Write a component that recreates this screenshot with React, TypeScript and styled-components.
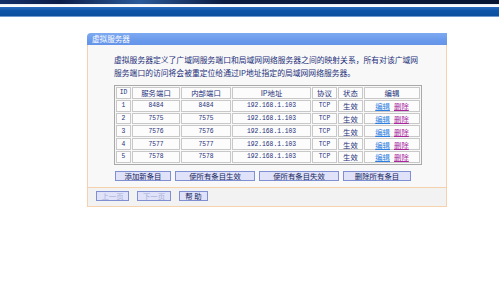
import React from "react";
import styled, { createGlobalStyle } from "styled-components";

const GlobalStyle = createGlobalStyle`
  html, body { margin: 0; padding: 0; background: #ffffff; }
  body { font-family: "Liberation Mono", "Noto Sans CJK SC", monospace; }
`;

const Header = styled.div`
  display: flex;
  flex-direction: column;
`;

const DarkBand = styled.div`
  height: 4px;
  background: linear-gradient(90deg, #14306a 0%, #0b1c48 12%, #2a5a9a 28%, #0a1a40 45%, #081634 100%);
`;

const LightLine = styled.div`
  height: 3px;
  background: linear-gradient(180deg, #e8eef6 0%, #ffffff 100%);
`;

const BlueBand = styled.div`
  height: 9px;
  background: linear-gradient(180deg, #2a6cc0 0%, #0f55a8 40%, #0c4f9e 100%);
  border-bottom: 1px solid #6f9bd0;
`;

const Content = styled.div`
  padding: 16px 0 0 87px;
`;

const Panel = styled.div`
  width: 360px;
  display: flex;
  flex-direction: column;
`;

const TitleBar = styled.div`
  height: 12px;
  border-radius: 4px 0 0 0;
  background: linear-gradient(180deg, #7eaaf0 0%, #6a9aec 60%, #6494e8 100%);
  color: #ffffff;
  font-family: "Noto Sans CJK SC", sans-serif;
  font-size: 7.6px;
  line-height: 12px;
  padding-left: 5px;
`;

const Body = styled.div`
  border: 1px solid #f6d2ac;
  border-top: none;
  background: #f8f8f8;
  display: flex;
  flex-direction: column;
`;

const Main = styled.div`
  padding: 8px 0 6px 26px;
  display: flex;
  flex-direction: column;
`;

const Description = styled.p`
  margin: 0;
  font-family: "Noto Sans CJK SC", sans-serif;
  font-size: 7.8px;
  line-height: 13px;
  color: #1d2f7a;
  white-space: nowrap;
`;

const Table = styled.table`
  margin-top: 6px;
  width: 308px;
  border: 1px solid #a9a9a9;
  border-collapse: separate;
  border-spacing: 1px;
  background: #f8f8f8;
`;

const Cell = styled.td<{ $w?: number; $mono?: boolean }>`
  width: ${(p) => (p.$w ? `${p.$w}px` : "auto")};
  height: 9.8px;
  padding: 0;
  border: 1px solid #c8c8c8;
  background: #fcfcfc;
  text-align: center;
  vertical-align: middle;
  line-height: 9px;
  color: #1d2f7a;
  font-family: ${(p) =>
    p.$mono ? `"Liberation Mono", monospace` : `"Noto Sans CJK SC", sans-serif`};
  font-size: ${(p) => (p.$mono ? "6.3px" : "7.4px")};
`;

const Link = styled.a<{ $visited?: boolean }>`
  color: ${(p) => (p.$visited ? "#a8279c" : "#2f7fe0")};
  text-decoration: underline;
  margin: 0 2px;
  cursor: pointer;
`;

const ActionRow = styled.div`
  margin-top: 6px;
  padding-left: 1px;
  display: flex;
  gap: 4px;
`;

const Btn = styled.button<{ $w: number; $disabled?: boolean }>`
  width: ${(p) => p.$w}px;
  height: 10px;
  padding: 0;
  margin: 0;
  box-sizing: border-box;
  border: 1px solid #7f8fd2;
  background: #dfe2f8;
  color: ${(p) => (p.$disabled ? "#a8b0d8" : "#14245e")};
  font-family: "Noto Sans CJK SC", sans-serif;
  font-size: 7.4px;
  line-height: 8px;
  white-space: nowrap;
`;

const Footer = styled.div`
  border-top: 1px solid #f6d2ac;
  background: #f2f2f2;
  padding: 3px 0 5px 8px;
  display: flex;
  gap: 8px;
`;

const rows = [
  { id: 1, port: "8484" },
  { id: 2, port: "7575" },
  { id: 3, port: "7576" },
  { id: 4, port: "7577" },
  { id: 5, port: "7578" },
];

export default function App() {
  return (
    <>
      <GlobalStyle />
      <Header>
        <DarkBand />
        <LightLine />
        <BlueBand />
      </Header>
      <Content>
        <Panel>
          <TitleBar>虚拟服务器</TitleBar>
          <Body>
            <Main>
              <Description>
                虚拟服务器定义了广域网服务端口和局域网网络服务器之间的映射关系，所有对该广域网
                <br />
                服务端口的访问将会被重定位给通过IP地址指定的局域网网络服务器。
              </Description>
              <Table>
                <tbody>
                  <tr>
                    <Cell $w={13} $mono>ID</Cell>
                    <Cell $w={46}>服务端口</Cell>
                    <Cell $w={48}>内部端口</Cell>
                    <Cell $w={77}>IP地址</Cell>
                    <Cell $w={23}>协议</Cell>
                    <Cell $w={23}>状态</Cell>
                    <Cell>编辑</Cell>
                  </tr>
                  {rows.map((r) => (
                    <tr key={r.id}>
                      <Cell $mono>{r.id}</Cell>
                      <Cell $mono>{r.port}</Cell>
                      <Cell $mono>{r.port}</Cell>
                      <Cell $mono>192.168.1.103</Cell>
                      <Cell $mono>TCP</Cell>
                      <Cell>生效</Cell>
                      <Cell>
                        <Link>编辑</Link>
                        <Link $visited>删除</Link>
                      </Cell>
                    </tr>
                  ))}
                </tbody>
              </Table>
              <ActionRow>
                <Btn $w={56}>添加新条目</Btn>
                <Btn $w={80}>使所有条目生效</Btn>
                <Btn $w={80}>使所有条目失效</Btn>
                <Btn $w={68}>删除所有条目</Btn>
              </ActionRow>
            </Main>
            <Footer>
              <Btn $w={33} $disabled>上一页</Btn>
              <Btn $w={34} $disabled>下一页</Btn>
              <Btn $w={29}>帮 助</Btn>
            </Footer>
          </Body>
        </Panel>
      </Content>
    </>
  );
}
